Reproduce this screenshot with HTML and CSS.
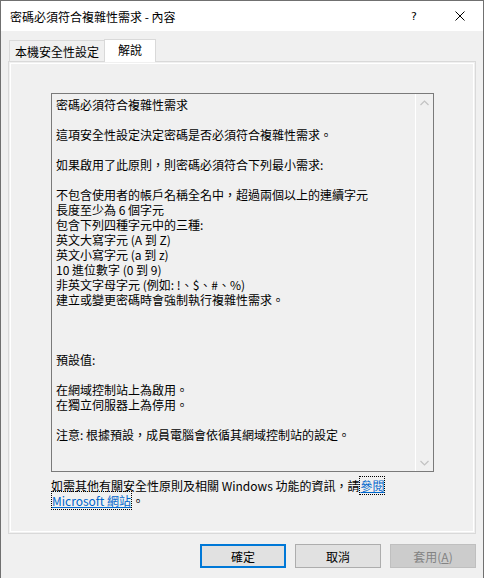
FILE: index.html
```html
<!DOCTYPE html>
<html lang="zh-Hant">
<head>
<meta charset="utf-8">
<title>密碼必須符合複雜性需求 - 內容</title>
<link rel="stylesheet" href="styles.css">
</head>
<body>
<div class="window">
  <div class="titlebar">
    <span class="title">密碼必須符合複雜性需求 - 內容</span>
    <span class="tb-btn help">?</span>
    <span class="tb-btn close">
      <svg width="10" height="10" viewBox="0 0 10 10"><path d="M0.5 0.5 L9.5 9.5 M9.5 0.5 L0.5 9.5" stroke="#000" stroke-width="1" fill="none"/></svg>
    </span>
  </div>
  <div class="content">
    <div class="tabs">
      <div class="tab">本機安全性設定</div>
      <div class="tab selected">解說</div>
    </div>
    <div class="panel">
      <div class="explain">
        <div class="explain-text">密碼必須符合複雜性需求

這項安全性設定決定密碼是否必須符合複雜性需求。

如果啟用了此原則，則密碼必須符合下列最小需求:

不包含使用者的帳戶名稱全名中，超過兩個以上的連續字元
長度至少為 6 個字元
包含下列四種字元中的三種:
英文大寫字元 (A 到 Z)
英文小寫字元 (a 到 z)
10 進位數字 (0 到 9)
非英文字母字元 (例如: !、$、#、%)
建立或變更密碼時會強制執行複雜性需求。



預設值:

在網域控制站上為啟用。
在獨立伺服器上為停用。

注意: 根據預設，成員電腦會依循其網域控制站的設定。</div>
        <div class="scrollbar">
          <div class="arrow">
            <svg width="9" height="6" viewBox="0 0 9 6"><path d="M0.5 5 L4.5 1 L8.5 5" stroke="#c2c2c2" stroke-width="1.2" fill="none"/></svg>
          </div>
          <div class="arrow">
            <svg width="9" height="6" viewBox="0 0 9 6"><path d="M0.5 1 L4.5 5 L8.5 1" stroke="#c2c2c2" stroke-width="1.2" fill="none"/></svg>
          </div>
        </div>
      </div>
      <p class="more">如需其他有關安全性原則及相關 Windows 功能的資訊，請<a class="link" href="#">參閱 Microsoft 網站</a>。</p>
    </div>
    <div class="buttons">
      <button class="btn default">確定</button>
      <button class="btn">取消</button>
      <button class="btn disabled">套用(<u>A</u>)</button>
    </div>
  </div>
</div>
</body>
</html>
```

FILE: styles.css
```css
* {
  box-sizing: border-box;
}

html, body {
  margin: 0;
  padding: 0;
}

body {
  width: 484px;
  height: 578px;
  overflow: hidden;
  background: #f0f0f0;
  font-family: "Noto Sans CJK TC", "Noto Sans", sans-serif;
  font-size: 12px;
  color: #000;
}

.window {
  width: 484px;
  height: 578px;
  border: 1px solid #707070;
  border-bottom: none;
  background: #f0f0f0;
}

.titlebar {
  height: 30px;
  background: #fff;
  display: flex;
  align-items: center;
  padding-left: 9px;
}

.title {
  flex: 1;
  line-height: 15px;
}

.tb-btn {
  width: 46px;
  height: 30px;
  display: flex;
  align-items: center;
  justify-content: center;
}

.help {
  font-size: 12px;
  font-family: "DejaVu Sans", sans-serif;
  font-size: 11px;
}

.content {
  padding: 0 7px;
}

.tabs {
  margin-top: 8px;
  height: 23px;
  display: flex;
  align-items: flex-end;
  padding-left: 1px;
  position: relative;
  z-index: 1;
  margin-bottom: -1px;
}

.tab {
  height: 21px;
  margin-bottom: 1px;
  border: 1px solid #d9d9d9;
  border-bottom: none;
  background: #f0f0f0;
  display: flex;
  align-items: center;
  justify-content: center;
  line-height: 15px;
  width: 96px;
}

.tab.selected {
  width: 52px;
  height: 23px;
  margin-bottom: 0;
  margin-left: -1px;
  background: #fff;
  padding-bottom: 3px;
}

.panel {
  height: 473px;
  border: 1px solid #d9d9d9;
  box-shadow: inset 0 0 0 1px #f0f0f0, inset 0 0 0 2px #fff;
  padding: 31px 41px 0 42px;
}

.explain {
  height: 379px;
  border: 1px solid #7a7a7a;
  display: flex;
  background: #f0f0f0;
}

.explain-text {
  flex: 1;
  white-space: pre-wrap;
  line-height: 15px;
  padding: 3px 4px 0 4px;
  overflow: hidden;
}

.scrollbar {
  width: 18px;
  border-left: 1px solid #fff;
  display: flex;
  flex-direction: column;
  justify-content: space-between;
}

.arrow {
  height: 17px;
  display: flex;
  align-items: center;
  justify-content: center;
}

.more {
  margin: 6px 0 0 0;
  line-height: 15px;
}

.link {
  color: #0066cc;
  text-decoration: underline;
  border: 1px dotted #000;
  -webkit-box-decoration-break: clone;
  box-decoration-break: clone;
}

.buttons {
  margin-top: 10px;
  display: flex;
  justify-content: flex-end;
  gap: 9px;
}

.btn {
  width: 86px;
  height: 24px;
  font-family: "Noto Sans CJK TC", "Noto Sans", sans-serif;
  font-size: 12px;
  line-height: 15px;
  background: #e1e1e1;
  border: 1px solid #adadad;
  color: #000;
  padding: 0;
  margin: 0;
}

.btn.default {
  border: 2px solid #0078d7;
}

.btn.disabled {
  background: #cccccc;
  border-color: #bfbfbf;
  color: #838383;
}
```
